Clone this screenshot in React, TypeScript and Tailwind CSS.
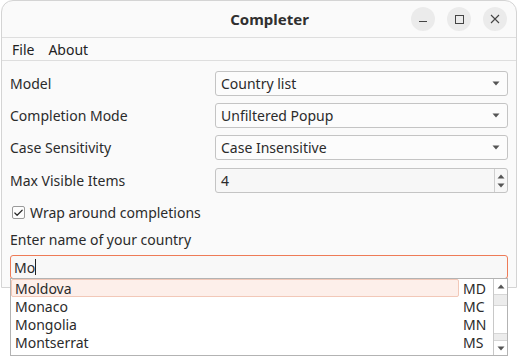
import { Check } from 'lucide-react';

const Caret = () => (
  <svg width="8" height="5" viewBox="0 0 8 5" className="text-[#555]">
    <path d="M0.5 0.5 L7.5 0.5 L4 4.5 Z" fill="currentColor" />
  </svg>
);

const Combo = ({ value }: { value: string }) => (
  <div className="h-[25px] flex items-center justify-between rounded-[3px] border border-[#c4c4c4] bg-[#fcfcfc] pl-[5px] pr-[7px]">
    <span>{value}</span>
    <Caret />
  </div>
);

const countries = [
  ['Moldova', 'MD'],
  ['Monaco', 'MC'],
  ['Mongolia', 'MN'],
  ['Montserrat', 'MS'],
];

const App = () => {
  return (
    <div
      className="relative w-[518px] h-[356px] bg-white overflow-hidden text-[14px] text-[#2b2b2b]"
      style={{ fontFamily: '"Noto Sans", "Open Sans", sans-serif' }}
    >
      <div className="ml-[1px] w-[516px] h-[288px] rounded-t-[12px] border border-[#d4d4d4] bg-[#fafafa] flex flex-col">
        {/* title bar */}
        <div className="h-[37px] flex items-center border-b border-[#dedede]">
          <div className="flex-1 flex justify-center pl-[126px] font-bold text-[15px] text-[#303030]">Completer</div>
          <div className="flex items-center gap-[12px] pr-[9px]">
            <div className="w-[24px] h-[24px] rounded-full bg-[#ebebeb] flex items-center justify-center">
              <div className="w-[8px] h-[1px] bg-[#444] mt-[5px]" />
            </div>
            <div className="w-[24px] h-[24px] rounded-full bg-[#ebebeb] flex items-center justify-center">
              <div className="w-[9px] h-[9px] border border-[#444]" />
            </div>
            <div className="w-[24px] h-[24px] rounded-full bg-[#ebebeb] flex items-center justify-center">
              <svg width="10" height="10" viewBox="0 0 10 10">
                <path d="M1 1 L9 9 M9 1 L1 9" stroke="#444" strokeWidth="1.1" />
              </svg>
            </div>
          </div>
        </div>

        {/* menu bar */}
        <div className="h-[23px] flex items-center gap-[14px] pl-[10px] border-b border-[#dedede] text-[#222]">
          <span>File</span>
          <span>About</span>
        </div>

        {/* form */}
        <div className="px-[8px] pt-[10px] flex flex-col">
          <div className="grid grid-cols-[205px_1fr] gap-y-[7px] items-center">
            <span>Model</span>
            <Combo value="Country list" />
            <span>Completion Mode</span>
            <Combo value="Unfiltered Popup" />
            <span>Case Sensitivity</span>
            <Combo value="Case Insensitive" />
            <span className="mt-[1px]">Max Visible Items</span>
            <div className="mt-[1px] h-[25px] flex items-stretch rounded-[3px] border border-[#c4c4c4] bg-[#f7f7f7]">
              <span className="flex-1 flex items-center pl-[5px]">4</span>
              <div className="w-[13px] border-l border-[#cfcfcf] flex flex-col items-center justify-center gap-[4px]">
                <svg width="8" height="5" viewBox="0 0 8 5">
                  <path d="M0.5 4.5 L7.5 4.5 L4 0.5 Z" fill="#555" />
                </svg>
                <Caret />
              </div>
            </div>
          </div>

          <div className="mt-[9px] flex items-center gap-[5px] pl-[2px]">
            <div className="w-[13px] h-[13px] rounded-[2px] border border-[#9a9a9a] bg-[#fdfdfd] flex items-center justify-center">
              <Check size={12} strokeWidth={2.6} className="text-[#2a2a2a]" />
            </div>
            <span>Wrap around completions</span>
          </div>

          <div className="mt-[6px]">Enter name of your country</div>

          <div className="mt-[5px] h-[24px] rounded-[3px] border border-[#ee7b57] bg-[#f8f8f8] flex items-center pl-[3px]">
            <span>Mo</span>
            <div className="w-[1px] h-[16px] bg-[#222]" />
          </div>
        </div>
      </div>

      {/* completion popup */}
      <div className="absolute left-[10px] top-[278px] w-[498px] h-[78px] border border-[#b3b3b3] bg-white flex">
        <div className="flex-1 flex flex-col">
          {countries.map(([name, code], i) => (
            <div key={code} className="h-[18px] flex items-center">
              <div
                className={
                  i === 0
                    ? 'flex-1 h-full flex items-center pl-[3px] rounded-[2px] border border-[#f2c8b8] bg-[#fdefea]'
                    : 'flex-1 h-full flex items-center pl-[4px]'
                }
              >
                {name}
              </div>
              <div className="w-[34px] pl-[4px]">{code}</div>
            </div>
          ))}
        </div>
        <div className="w-[14px] border-l border-[#c8c8c8] flex flex-col">
          <div className="h-[15px] flex items-center justify-center">
            <svg width="8" height="5" viewBox="0 0 8 5">
              <path d="M0.5 4.5 L7.5 4.5 L4 0.5 Z" fill="#555" />
            </svg>
          </div>
          <div className="flex-1 flex flex-col border-y border-[#d6d6d6]">
            <div className="h-[11px] bg-[#ececec] border-b border-[#d6d6d6]" />
            <div className="flex-1 bg-white" />
            <div className="h-[7px] bg-[#ececec] border-t border-[#d6d6d6]" />
          </div>
          <div className="h-[14px] flex items-center justify-center">
            <Caret />
          </div>
        </div>
      </div>
    </div>
  );
};

export default App;
